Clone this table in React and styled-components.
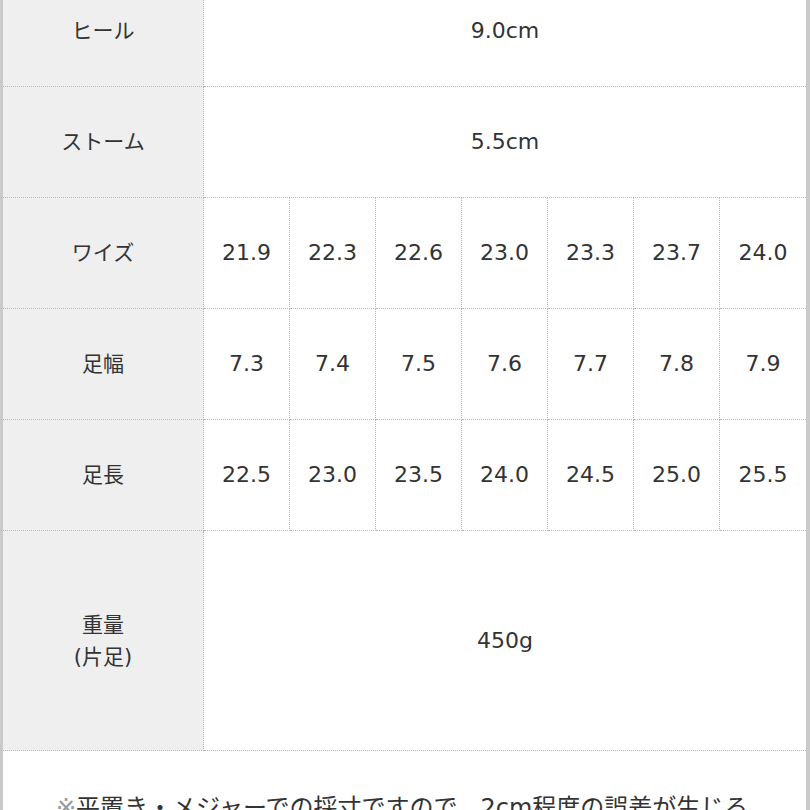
import React from "react";
import styled, { createGlobalStyle } from "styled-components";

const Global = createGlobalStyle`
  html, body { margin: 0; padding: 0; background: #fff; }
  body { font-family: "DejaVu Sans", "Noto Sans CJK JP", sans-serif; color: #333; overflow: hidden; }
`;

const Frame = styled.div`
  width: 810px;
  height: 810px;
  box-sizing: border-box;
  border-left: 3px solid #cacaca;
  border-right: 4px solid #cacaca;
  overflow: hidden;
`;

const Table = styled.div`
  margin-top: -24px;
  display: grid;
  grid-template-columns: 201px repeat(7, 1fr);
`;

const Cell = styled.div`
  box-sizing: border-box;
  height: ${(p) => p.$h || 111}px;
  display: flex;
  flex-direction: column;
  align-items: center;
  justify-content: center;
  font-size: 21px;
  line-height: 32px;
  text-align: center;
  border-bottom: 1px dotted #b8b8b8;
  border-right: ${(p) => (p.$last ? "none" : "1px dotted #b8b8b8")};
`;

const Th = styled(Cell)`
  background: #efefef;
  color: #333;
`;

const Td = styled(Cell)`
  background: #fff;
  grid-column: span ${(p) => p.$span || 1};
  font-size: 22px;
`;

const Note = styled.div`
  grid-column: 1 / -1;
  padding: 41px 0 0 53px;
  font-size: 24px;
  line-height: 32px;
  color: #333;
  white-space: nowrap;
`;

const Mark = styled.span`
  color: #999;
`;

const rows = [
  { h: "ヒール", v: "9.0cm" },
  { h: "ストーム", v: "5.5cm" },
  { h: "ワイズ", vals: ["21.9", "22.3", "22.6", "23.0", "23.3", "23.7", "24.0"] },
  { h: "足幅", vals: ["7.3", "7.4", "7.5", "7.6", "7.7", "7.8", "7.9"] },
  { h: "足長", vals: ["22.5", "23.0", "23.5", "24.0", "24.5", "25.0", "25.5"] },
];

export default function App() {
  return (
    <Frame>
      <Global />
      <Table>
        {rows.map((r) => (
          <React.Fragment key={r.h}>
            <Th>{r.h}</Th>
            {r.vals ? (
              r.vals.map((v, i) => (
                <Td key={i} $last={i === r.vals.length - 1}>
                  {v}
                </Td>
              ))
            ) : (
              <Td $span={7} $last>
                {r.v}
              </Td>
            )}
          </React.Fragment>
        ))}
        <Th $h={220}>
          <span>重量</span>
          <span>(片足)</span>
        </Th>
        <Td $span={7} $last $h={220}>
          450g
        </Td>
        <Note>
          <Mark>※</Mark>平置き・メジャーでの採寸ですので、2cm程度の誤差が生じる
        </Note>
      </Table>
    </Frame>
  );
}
